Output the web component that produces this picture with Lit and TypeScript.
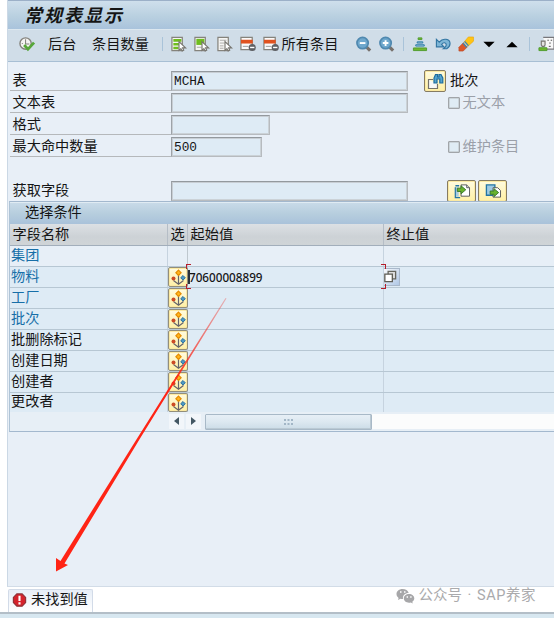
import { LitElement, html, css, svg, nothing } from "lit";
import { customElement, property } from "lit/decorators.js";

const list = svg`<path d="M1 1h11v14H1z" fill="#f6f6f4" stroke="#85837c" stroke-width="1.3"/>`;
const cursor = svg`<path d="M8.500 5.500v9.200l2-1.800 1.300 2.600 1.700-.8-1.200-2.600h3.200z" fill="#fff" stroke="#77756f" stroke-width="1.200"/>`;
const lens = svg`<path d="M10.500 10.500l4.500 4.500" stroke="#77716b" stroke-width="3.400"/><circle cx="7" cy="7" r="6" fill="#6fa8cd" stroke="#5089b0" stroke-width="1.800"/>`;
const minusTable = svg`<path d="M1 1h12v13H1z" fill="#fafafa" stroke="#85837c" stroke-width="1.300"/><path d="M1 3.500h12.500v4H1z" fill="#e0521f"/><path d="M3 10.500h6" stroke="#999"/><circle cx="13" cy="11.700" r="3.800" fill="#5e6064"/><path d="M10.700 11.700h4.600" stroke="#fff" stroke-width="1.500"/>`;
const page = svg`<path d="M7.500 1.500h6l3 3v9h-9z" fill="#fff" stroke="#56575a"/><path d="M13.500 1.500v3h3" fill="#ddd" stroke="#56575a"/>`;

const shapes: Record<string, unknown> = {
  run: svg`<circle cx="7" cy="7.500" r="6" fill="#f4f4f2" stroke="#85837d" stroke-width="1.500"/><path d="M7 3v5h4M3 7.500h1M7 12v-1" stroke="#77756f" fill="none"/><path d="M5.500 9l4 4.500L16 6.500" fill="none" stroke="#57a63a" stroke-width="3"/>`,
  all: svg`${list}<path d="M2.500 2.800h8.500v2.700H2.500zM2.500 7h6v2.600h-6zM2.500 11h5.500v2.500H2.500z" fill="#6fbd1e"/>${cursor}`,
  block: svg`${list}<path d="M2.500 2.500h8.500v6.500H2.500z" fill="#6fbd1e"/><path d="M3 11.500h5" stroke="#aaa"/>${cursor}`,
  none: svg`${list}<path d="M3 4h7M3 7h5M3 10h4M3 12.500h4" stroke="#aaa9a5"/>${cursor}`,
  minus: minusTable,
  zoomOut: svg`${lens}<path d="M4 7h6" stroke="#fff" stroke-width="2"/>`,
  zoomIn: svg`${lens}<path d="M4 7h6M7 4v6" stroke="#fff" stroke-width="2"/>`,
  stack: svg`<path d="M6.500 1.500h4v1.800h-4z" fill="#74b72f" stroke="#4f9d2d"/><path d="M5.500 5.700h6v1.300h-6zM4 8.800h9v1.400H4z" fill="#b7d7e8" stroke="#2878a4"/><path d="M1.500 12.200h14v2.800h-14z" fill="#74b72f" stroke="#4f9d2d"/>`,
  undo: svg`<path d="M1.500 3v8h8L7 8.500c2-3 5-2 5 .5 0 2-1.500 3-3 4h3.500C15 11.500 16 10 16 7.500 16 2.500 8.500 1 4.500 6z" fill="#7db5d6" stroke="#3275a2" stroke-width="1.200"/>`,
  eraser: svg`<path d="M11 .5h5.500V5L10 11 6 6.500z" fill="#ffc414" stroke="#e9a000" stroke-width=".6"/><path d="M1 11.500L6 6.500l4 4.500-4.500 4.500H1z" fill="#dc5729" stroke="#b94a27" stroke-width=".7"/><path d="M5.300 7l4 4.500M7 5.300l4 4.500" stroke="#3a88b4" stroke-width="1.400"/><path d="M6.200 6.200l4 4.500" stroke="#e8f3f8" stroke-width=".8"/>`,
  down: svg`<path d="M2.500 5.500h12l-6 6z" fill="#000"/>`,
  up: svg`<path d="M2.500 11.500h12l-6-6z" fill="#000"/>`,
  user: svg`<path d="M5.500 1H17v12.500H9" fill="#f8f8f8" stroke="#77777b" stroke-width="1.200"/><path d="M10 4h1.500M13.500 4H15M12 7h1.500M11.500 10.500h2" stroke="#444"/><path d="M3.500 5h4v4l-1 1.500h-2l-1-1.500z" fill="#e4e4e2" stroke="#77756f" stroke-width="1.200"/><path d="M1 15v-3h8.500v3z" fill="#6eb52d" stroke="#4f9d2d"/>`,
  find: svg`<path d="M1.500 6.500v9h9v-4.500M1.500 6.500h4.500" fill="#f8f8f6"/><path d="M6 6.500H1.500v9h9V11" fill="none" stroke="#75726a" stroke-width="1.200"/><path d="M7 10V5l1.500-3.500h2V4H12V1.500h2L15.800 5v5h-3V6H10v4z" fill="#56a5cf" stroke="#1d6c9e" stroke-width="1.200"/>`,
  importPage: svg`<path d="M1.500 4v11h5M1.500 2.500h4" fill="none" stroke="#2375a5" stroke-width="1.500"/><path d="M2 4h3v10H2z" fill="#a7cde2"/>${page}<path d="M3.500 5h4V2.500l5 4.200-5 4.300V8.500h-4z" fill="#69b32d" stroke="#38772b"/>`,
  exportPage: svg`<path d="M1.500 1.500h9v11h-9z" fill="#9dcae4" stroke="#2375a5" stroke-width="1.400"/><path d="M8.500 4.500h5l3 3v7h-8z" fill="#fff" stroke="#56575a"/><path d="M5.500 8h4V5.500l5 4.200-5 4.300v-2.500h-4z" fill="#69b32d" stroke="#38772b"/>`,
  select: svg`<path d="M8.500 6v9M3.500 11.500l5 3.700 5-3.700" fill="none" stroke="#65646a" stroke-width="1.200"/><path d="M8.500 1.200l2.600 2.600-2.600 2.600-2.600-2.600z" fill="#ffb51d" stroke="#e58b00" stroke-width="1.200"/><circle cx="3.500" cy="9.500" r="2" fill="#cc4b25"/><path d="M13 6.500l2.300 2.300-2.300 2.300-2.300-2.300z" fill="#4c99c4" stroke="#296f9e"/>`,
  help: svg`<path d="M6.500 2.500h8v8h-8z" fill="#ddd" stroke="#66655d" stroke-width="1.400"/><path d="M3 5.500h8v8H3z" fill="#fff" stroke="#5e5d55" stroke-width="1.400"/>`,
  error: svg`<path d="M5.500 1h6l4 4v6l-4 4h-6l-4-4V5z" fill="#d5232c" stroke="#8c3036" stroke-width="1.300"/><path d="M8.500 3v6M8.500 10.700V13" stroke="#fff" stroke-width="2.400"/>`,
};

@customElement("ui-icon")
class UiIcon extends LitElement {
  @property() name = "";
  static styles = css`
    :host { display: block; width: 16px; height: 16px; flex: none; }
    svg { display: block; width: 100%; height: 100%; overflow: visible; }
  `;
  render() {
    return html`<svg viewBox="0 0 17 16" fill="none">${shapes[this.name]}</svg>`;
  }
}

const rows = [
  { name: "集团", key: true, noSelect: true },
  { name: "物料", key: true, value: "70600008899" },
  { name: "工厂", key: true },
  { name: "批次", key: true },
  { name: "批删除标记" },
  { name: "创建日期" },
  { name: "创建者" },
  { name: "更改者" },
] as { name: string; key?: boolean; noSelect?: boolean; value?: string }[];

@customElement("app-root")
class AppRoot extends LitElement {
  static styles = css`
    :host { display: block; position: relative; width: 554px; height: 618px; overflow: hidden; background: #fff;
      font: 14.2px/20px "Noto Sans CJK SC", sans-serif; color: #151515; white-space: nowrap; }
    * { box-sizing: border-box; }
    .window { margin-left: 7px; height: 587px; border-left: 1px solid #cbd8e5; border-bottom: 1px solid #d2dce7; background: #e8eff7; }
    .title { height: 30px; border-top: 1px solid #9cb0c8; border-bottom: 1px solid #dce7ef; padding-left: 16px;
      background: linear-gradient(#cfdfec, #b9d0e0 55%, #a9c3dc); font: italic 700 18px/27px "Noto Sans CJK SC", sans-serif; letter-spacing: 2px; }
    .toolbar { height: 32px; display: flex; align-items: center; background: #d0dde8; border-bottom: 1px solid #a8bfd4; padding: 0 0 3px 11px; }
    .toolbar > span { position: relative; top: -1px; }
    .label1 { margin-left: 13px; width: 45px; }
    .label2 { width: 71px; }
    .label3 { margin-left: 3px; width: 76px; }
    .sep { width: 1px; height: 14px; background: #a9c3d9; flex: none; }
    .group { display: flex; gap: 7px; }
    .g1 { margin-left: 8px; } .g2 { margin-right: 8px; } .g3 { margin: 0 9px 0 8px; } .g4 { margin-left: 8px; }
    .form { padding: 9px 0 0 2px; height: 139px; overflow: hidden; }
    .row { height: 22px; display: flex; align-items: flex-start; }
    .name { width: 161px; height: 20px; border-bottom: 1px solid #b5b8bb; padding-left: 2.5px; line-height: 16px; }
    .name.bare { border-bottom-color: transparent; }
    .input { height: 20px; width: 237px; border: 1px solid #b7bbbf; border-top-color: #93999e; border-left-color: #9da3a8; box-shadow: inset 1px 1px #c8ced4, inset -1px -1px #cbd2d7; background: #deebf5; padding-left: 2px;
      font: 12.8px/20px "Liberation Mono", monospace; }
    .w99 { width: 99px; } .w91 { width: 91px; }
    .btn { display: flex; align-items: center; justify-content: center; border: 1px solid #857b63; border-radius: 2px; background: linear-gradient(#fffbe0, #fff0a5); box-shadow: inset 0 0 0 1px #fbe9a1; flex: none; }
    .find { width: 22px; height: 22px; margin: -1px 4px 0 16px; }
    .find ui-icon { width: 17px; height: 16px; }
    .side { line-height: 16px; }
    .box { width: 12px; height: 12px; border: 1px solid #a1a5a9; border-radius: 1px; box-shadow: inset 0 0 0 .5px #b8bcc0; background: #dfecf5; }
    .check { display: flex; align-items: flex-start; gap: 2.5px; height: 18px; line-height: 16px; color: #9ba0a9; }
    .afterLong { margin-left: 40px; } .afterShort { margin-left: 186px; }
    .check .box { margin-top: 4px; }
    .pages { display: flex; gap: 2px; margin: -1px 0 0 39px; }
    .pages .btn { width: 29px; height: 22px; }
    .pages ui-icon { margin-top: -1px; }
    .panel { margin-left: 1px; height: 231px; border: 1px solid #a3b8ce; border-right: 0; border-left-color: #afc3d5; background: #e7eff6; overflow: hidden; }
    .caption { height: 22px; border-top: 1px solid #e0ebf3; padding: 0 15px; background: linear-gradient(#c8dae8, #b7cede 50%, #a9c2da); line-height: 17px; }
    .cols { display: grid; grid-template-columns: 158px 20px 196px 1fr; }
    .head { height: 22px; background: linear-gradient(#dce0e4, #cdd2d6 60%, #cfd4d7); border-bottom: 1px solid #a2aebb; line-height: 19px; }
    .head > * { padding-left: 2.5px; border-right: 1px solid #b5bdc6; }
    .head > :last-child, .line > :last-child { border-right: 0; }
    .line { height: 21px; background: #deebf5; border-bottom: 1px solid #b7c7d3; line-height: 16px; }
    .line:first-child { background: #e7eff7; }
    .line:nth-child(8) { height: 19px; border-bottom: 0; line-height: 15px; }
    .line > * { border-right: 1px solid #c6d3df; padding-left: 1px; }
    .key { color: #176fa8; }
    .cell { padding: 0; border-right-color: #bec7ce; }
    .cell .btn { width: 20px; height: 20px; margin-top: 0; border-color: #928e7b; }
    .cell .btn ui-icon { width: 17px; height: 16px; }
    .line:nth-child(8) .btn { height: 19px; }
    .low { position: relative; padding-left: 1px; font: 500 11.7px/20px "Noto Sans", sans-serif; }
    .low::before { content: ""; position: absolute; left: 0; top: 3px; width: 2px; height: 14px; background: #29313a; }
    .corner { position: absolute; width: 5px; height: 5px; border: 1px solid #b51e2b; }
    .tl { left: -2px; top: -3px; border-right: 0; border-bottom: 0; }
    .bl { left: -2px; bottom: -2px; border-right: 0; border-top: 0; }
    .tr { right: -3px; top: -3px; border-left: 0; border-bottom: 0; }
    .br { right: -3px; bottom: -2px; border-left: 0; border-top: 0; }
    .high { padding: 0; }
    .f4 { display: block; width: 16px; height: 18px; margin-top: 1px; border: 1px solid #a9b8ca; border-left: 0; background: linear-gradient(135deg, #f7f9fc, #afc7e5); }
    .f4 ui-icon { width: 16px; height: 15px; margin-left: -2px; }
    .scroll { display: flex; height: 20px; padding: 2px 0 3px 159px; }
    .arrow { width: 15px; height: 15px; margin-right: 2px; background: #f2f6fa; display: grid; place-items: center; }
    .arrow svg { display: block; margin-top: -2px; }
    .track { flex: 1; margin-left: 2px; height: 15px; background: #fbfcfc; }
    .thumb { display: grid; place-items: center; width: 167px; height: 16px; border: 1px solid #a8b9c7; border-radius: 1px; background: linear-gradient(#e7eff6, #dce8f0 50%, #ccdce7); box-shadow: inset -1px -1px #bac9d3; }
    .status { margin: 2px 0 0 8px; width: 85px; height: 23px; display: flex; align-items: flex-start; gap: 4px; padding-left: 3px; border: 1px solid #d2dbe8; border-bottom: 0; border-radius: 2px 2px 0 0; background: linear-gradient(#e7eef7, #fff); line-height: 17px; }
    .status ui-icon { width: 15px; height: 14px; margin-top: 3px; }
    .foot { height: 6px; border-top: 2px solid #b3bec7; background: #d7e7f0; }
    .mark { position: absolute; left: 396px; top: 586px; display: flex; align-items: center; gap: 3.5px; color: #aaaaac; font-size: 14.5px; line-height: 20px; }
    .mark svg { display: block; }
    .latin { font-family: Roboto, "Noto Sans CJK SC", sans-serif; word-spacing: 2px; }
    .tail { letter-spacing: .6px; }
    .pointer { position: absolute; left: 0; top: 0; width: 554px; height: 618px; pointer-events: none; }
  `;

  icons(...names: string[]) {
    return names.map((n) => html`<ui-icon name=${n}></ui-icon>`);
  }

  render() {
    return html`
      <div class="window">
        <div class="title">常规表显示</div>
        <div class="toolbar">
          ${this.icons("run")}
          <span class="label1">后台</span><span class="label2">条目数量</span>
          <i class="sep"></i>
          <div class="group g1">${this.icons("all", "block", "none", "minus", "minus")}</div>
          <span class="label3">所有条目</span>
          <div class="group g2">${this.icons("zoomOut", "zoomIn")}</div>
          <i class="sep"></i>
          <div class="group g3">${this.icons("stack", "undo", "eraser", "down", "up")}</div>
          <i class="sep"></i>
          <div class="group g4">${this.icons("user")}</div>
        </div>
        <div class="form">
          <div class="row"><span class="name">表</span><span class="input">MCHA</span><span class="btn find">${this.icons("find")}</span><span class="side">批次</span></div>
          <div class="row"><span class="name">文本表</span><span class="input"></span><span class="check afterLong"><i class="box"></i>无文本</span></div>
          <div class="row"><span class="name">格式</span><span class="input w99"></span></div>
          <div class="row"><span class="name">最大命中数量</span><span class="input w91">500</span><span class="check afterShort"><i class="box"></i>维护条目</span></div>
          <div class="row"></div>
          <div class="row"><span class="name bare">获取字段</span><span class="input"></span>
            <span class="pages"><span class="btn">${this.icons("importPage")}</span><span class="btn">${this.icons("exportPage")}</span></span></div>
        </div>
        <div class="panel">
          <div class="caption">选择条件</div>
          <div class="cols head"><span>字段名称</span><span>选</span><span>起始值</span><span>终止值</span></div>
          <div class="body">
            ${rows.map((r) => html`<div class="cols line">
              <span class=${r.key ? "key" : ""}>${r.name}</span>
              <span class="cell">${r.noSelect ? nothing : html`<span class="btn">${this.icons("select")}</span>`}</span>
              ${r.value
                ? html`<span class="low">${r.value}<i class="corner tl"></i><i class="corner bl"></i><i class="corner tr"></i><i class="corner br"></i></span>
                    <span class="high"><span class="f4">${this.icons("help")}</span></span>`
                : html`<span></span><span></span>`}
            </div>`)}
          </div>
          <div class="scroll">
            <span class="arrow"><svg width="5" height="8"><path d="M5 0v8L0 4z" fill="#435763" /></svg></span>
            <span class="arrow"><svg width="5" height="8"><path d="M0 0v8l5-4z" fill="#435763" /></svg></span>
            <div class="track"><div class="thumb"><svg width="9" height="6"><path d="M0 1h9M0 5h9" stroke="#a2b6c6" stroke-width="2" stroke-dasharray="2 1.500" /></svg></div></div>
          </div>
        </div>
      </div>
      <div class="status">${this.icons("error")}<span>未找到值</span></div>
      <div class="foot"></div>
      <div class="mark">
        <svg width="19" height="16" viewBox="0 0 19 16"><path d="M6.500 1C3 1 .5 3.200.5 6c0 1.600.8 2.900 2.100 3.900L2 12l2.500-1.300c.9.200 1.700.3 2.500.2C6.500 7.500 9 5 12.700 5 12 2.600 9.600 1 6.500 1z" fill="#a7a7a9" /><path d="M13 6c-3 0-5.200 1.900-5.200 4.300 0 2.500 2.300 4.400 5.200 4.400.6 0 1.200-.1 1.800-.3l2 1.100-.5-1.800c1.300-.8 2-2 2-3.400C18.300 7.900 16 6 13 6z" fill="#a7a7a9" /><path d="M4 4h1.500M8 4h1.500M10.600 9H12M14.200 9h1.400" stroke="#fff" stroke-width="1.400" /></svg>
        <span class="latin">公众号 · <span class="tail">SAP养家</span></span>
      </div>
      <svg class="pointer" viewBox="0 0 554 618">
        <defs><linearGradient id="fade" gradientUnits="userSpaceOnUse" x1="226" y1="298" x2="170" y2="390"><stop offset="0" stop-color="#f02b22" stop-opacity=".3" /><stop offset="1" stop-color="#ff2415" /></linearGradient></defs>
        <path d="M225.500 298L138 437 60.500 561l-4.500-3L56 571.500 68 565l-3.500-1.500L140 438.500 226.500 298.500z" fill="url(#fade)" />
      </svg>`;
  }
}
